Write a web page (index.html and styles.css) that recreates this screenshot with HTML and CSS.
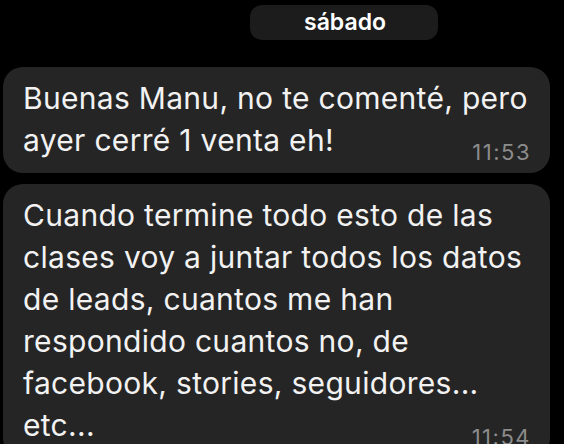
FILE: index.html
```html
<!DOCTYPE html>
<html lang="es">
<head>
    <meta charset="UTF-8">
    <meta name="viewport" content="width=device-width, initial-scale=1.0">
    <title>Chat</title>
    <link rel="stylesheet" href="styles.css">
</head>
<body>
    <div class="chat">
        <div class="day-row">
            <div class="day-pill">sábado</div>
        </div>

        <div class="bubble">
            <p class="msg-text">Buenas Manu, no te comenté, pero ayer cerré 1 venta eh!<span class="spacer"></span></p>
            <span class="msg-time">11:53</span>
        </div>

        <div class="bubble">
            <p class="msg-text">Cuando termine todo esto de las clases voy a juntar todos los datos de leads, cuantos me han respondido cuantos no, de facebook, stories, seguidores... etc...<span class="spacer"></span></p>
            <span class="msg-time">11:54</span>
        </div>
    </div>
</body>
</html>
```

FILE: styles.css
```css
html, body { margin: 0; padding: 0; background: #000; height: 100%; overflow: hidden; }
body { font-family: Inter, "Liberation Sans", Arial, sans-serif; color: #f2f2f2; }
.chat { display: flex; flex-direction: column; align-items: flex-start; gap: 11px; padding: 5px 0 0 3px; }
.day-row { width: 100%; margin-bottom: 16px; }
.day-pill { margin-left: 247px; width: 188px; height: 35px; border-radius: 12px; background: #1c1c1d; color: #fff; font-size: 23px; font-weight: 600; line-height: 35px; text-align: center; box-sizing: border-box; padding-left: 2px; }
.bubble { position: relative; max-width: 547px; box-sizing: border-box; background: #252525; border-radius: 20px; padding: 10px 22px 12px 20px; }
.msg-text { margin: 0; font-size: 30px; line-height: 42px; letter-spacing: 0.3px; }
.spacer { display: inline-block; width: 80px; height: 1px; }
.msg-time { position: absolute; right: 19px; bottom: 10px; font-size: 22px; line-height: 22px; letter-spacing: 1.5px; color: #8c8c8c; }
```
